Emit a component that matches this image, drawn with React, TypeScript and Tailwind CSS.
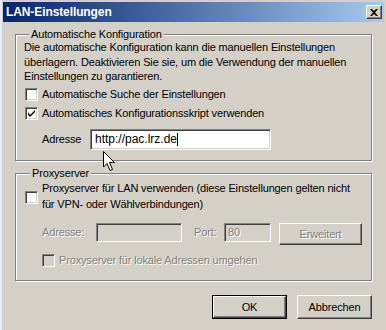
import React from "react";

const font = "font-['Tahoma','Liberation_Sans',Arial,sans-serif]";

function Sunken({ className = "", children }: { className?: string; children?: React.ReactNode }) {
  return (
    <div
      className={
        "border-t border-l border-t-[#808080] border-l-[#808080] border-b border-r border-b-white border-r-white shadow-[inset_1px_1px_0_#404040,inset_-1px_-1px_0_#d4d0c8] " +
        className
      }
    >
      {children}
    </div>
  );
}

function CheckBox({ checked = false, disabled = false, className = "" }: { checked?: boolean; disabled?: boolean; className?: string }) {
  return (
    <div
      className={
        "w-[13px] h-[13px] shrink-0 border-t border-l border-t-[#808080] border-l-[#808080] border-b border-r border-b-white border-r-white shadow-[inset_1px_1px_0_#404040,inset_-1px_-1px_0_#d4d0c8] flex items-center justify-center " +
        (disabled ? "bg-[#d4d0c8] " : "bg-white ") +
        className
      }
    >
      {checked && (
        <svg width="7" height="7" viewBox="0 0 7 7">
          <path d="M0 2 L0 5 L2 7 L7 2 L7 0 L2 5 Z" fill="#000" />
        </svg>
      )}
    </div>
  );
}

function Raised({ className = "", children, def = false }: { className?: string; children?: React.ReactNode; def?: boolean }) {
  return (
    <div className={(def ? "border border-black " : "") + className}>
      <div className="w-full h-full border-t border-l border-t-white border-l-white border-b border-r border-b-[#404040] border-r-[#404040] shadow-[inset_-1px_-1px_0_#808080] flex items-center justify-center bg-[#d4d0c8]">
        {children}
      </div>
    </div>
  );
}

function Group({ title, className = "", children }: { title: string; className?: string; children?: React.ReactNode }) {
  return (
    <fieldset
      className={
        "border border-[#808080] shadow-[1px_1px_0_#fff,inset_1px_1px_0_#fff] m-0 shrink-0 " + className
      }
    >
      <legend className="ml-[5px] px-[2px] bg-[#d4d0c8] leading-[13px]">{title}</legend>
      {children}
    </fieldset>
  );
}

const disabledText = "text-[#808080] [text-shadow:1px_1px_0_#fff]";

export default function App() {
  return (
    <div className={"w-[386px] h-[330px] overflow-hidden relative bg-[#d4d0c8] text-[11px] text-black tracking-[-0.15px] " + font}>
      <div className="flex h-full">
        {/* left strip */}
        <div className="w-[3px] h-full bg-[#e9ecf2] border-r border-r-[#c8ccd4]" />
        <div className="flex-1 flex flex-col pt-[2px]">
          {/* title bar */}
          <div className="h-[20px] shrink-0 mr-[2px] bg-gradient-to-r from-[#0a246a] to-[#a6caf0] flex items-center justify-between pl-[3px] pr-[2px]">
            <span className="text-white font-bold text-[12px] tracking-[-0.1px]">LAN-Einstellungen</span>
            <Raised className="w-[16px] h-[14px]">
              <svg width="8" height="7" viewBox="0 0 8 7">
                <path d="M0 0h2l2 2l2-2h2l-3 3.5l3 3.5h-2l-2-2l-2 2h-2l3-3.5z" fill="#000" />
              </svg>
            </Raised>
          </div>
          {/* body */}
          <div className="flex flex-col pl-[12px] pr-[14px] pt-[6px]">
            <Group title="Automatische Konfiguration" className="h-[133px] pl-[8px] pr-[6px]">
              <div className="leading-[14.5px] -mt-[1px]">
                Die automatische Konfiguration kann die manuellen Einstellungen überlagern. Deaktivieren Sie sie, um die Verwendung der manuellen Einstellungen zu garantieren.
              </div>
              <div className="flex items-center gap-[4px] mt-[4px] pl-[1px] h-[13px] leading-[13px]">
                <CheckBox />
                <span>Automatische Suche der Einstellungen</span>
              </div>
              <div className="flex items-center gap-[4px] mt-[6px] pl-[1px] h-[13px] leading-[13px]">
                <CheckBox checked />
                <span>Automatisches Konfigurationsskript verwenden</span>
              </div>
              <div className="flex items-center mt-[9px] pl-[18px]">
                <span className="w-[48px]">Adresse</span>
                <Sunken className="w-[181px] h-[21px] bg-white flex items-center pl-[4px]">
                  <span className="text-[12px] tracking-normal">http://pac.lrz.de</span>
                  <span className="w-[1px] h-[13px] bg-black" />
                </Sunken>
              </div>
            </Group>

            <Group title="Proxyserver" className="h-[114px] mt-[6px] pl-[9px] pr-[6px]">
              <div className="flex items-start gap-[4px] mt-[1px]">
                <CheckBox className="mt-[10px]" />
                <span className="leading-[15.5px]">
                  Proxyserver für LAN verwenden (diese Einstellungen gelten nicht für VPN- oder Wählverbindungen)
                </span>
              </div>
              <div className="flex items-start mt-[11px] pl-[17px]">
                <span className={"w-[54px] leading-[19px] " + disabledText}>Adresse:</span>
                <Sunken className="w-[86px] h-[19px] bg-[#d4d0c8]" />
                <span className={"ml-[12px] w-[30px] leading-[19px] " + disabledText}>Port:</span>
                <Sunken className="w-[47px] h-[19px] bg-[#d4d0c8] flex items-center pl-[3px]">
                  <span className={disabledText}>80</span>
                </Sunken>
                <Raised className="ml-[8px] w-[83px] h-[22px]">
                  <span className={disabledText}>Erweitert</span>
                </Raised>
              </div>
              <div className="flex items-center gap-[4px] mt-[9px] pl-[17px] h-[13px]">
                <CheckBox disabled />
                <span className={disabledText}>Proxyserver für lokale Adressen umgehen</span>
              </div>
            </Group>

            <div className="flex justify-end gap-[10px] mt-[14px]">
              <Raised def className="w-[75px] h-[24px]">
                OK
              </Raised>
              <Raised className="w-[75px] h-[24px]">Abbrechen</Raised>
            </div>
          </div>
        </div>
      </div>
      {/* mouse pointer */}
      <svg className="absolute left-[103px] top-[151px]" width="14" height="22" viewBox="0 0 14 22">
        <path d="M0.5 0.5 L0.5 16 L4 12.5 L7 19.5 L9.5 18.5 L6.5 11.5 L11.5 11.5 Z" fill="#fff" stroke="#000" strokeWidth="1" />
      </svg>
    </div>
  );
}
